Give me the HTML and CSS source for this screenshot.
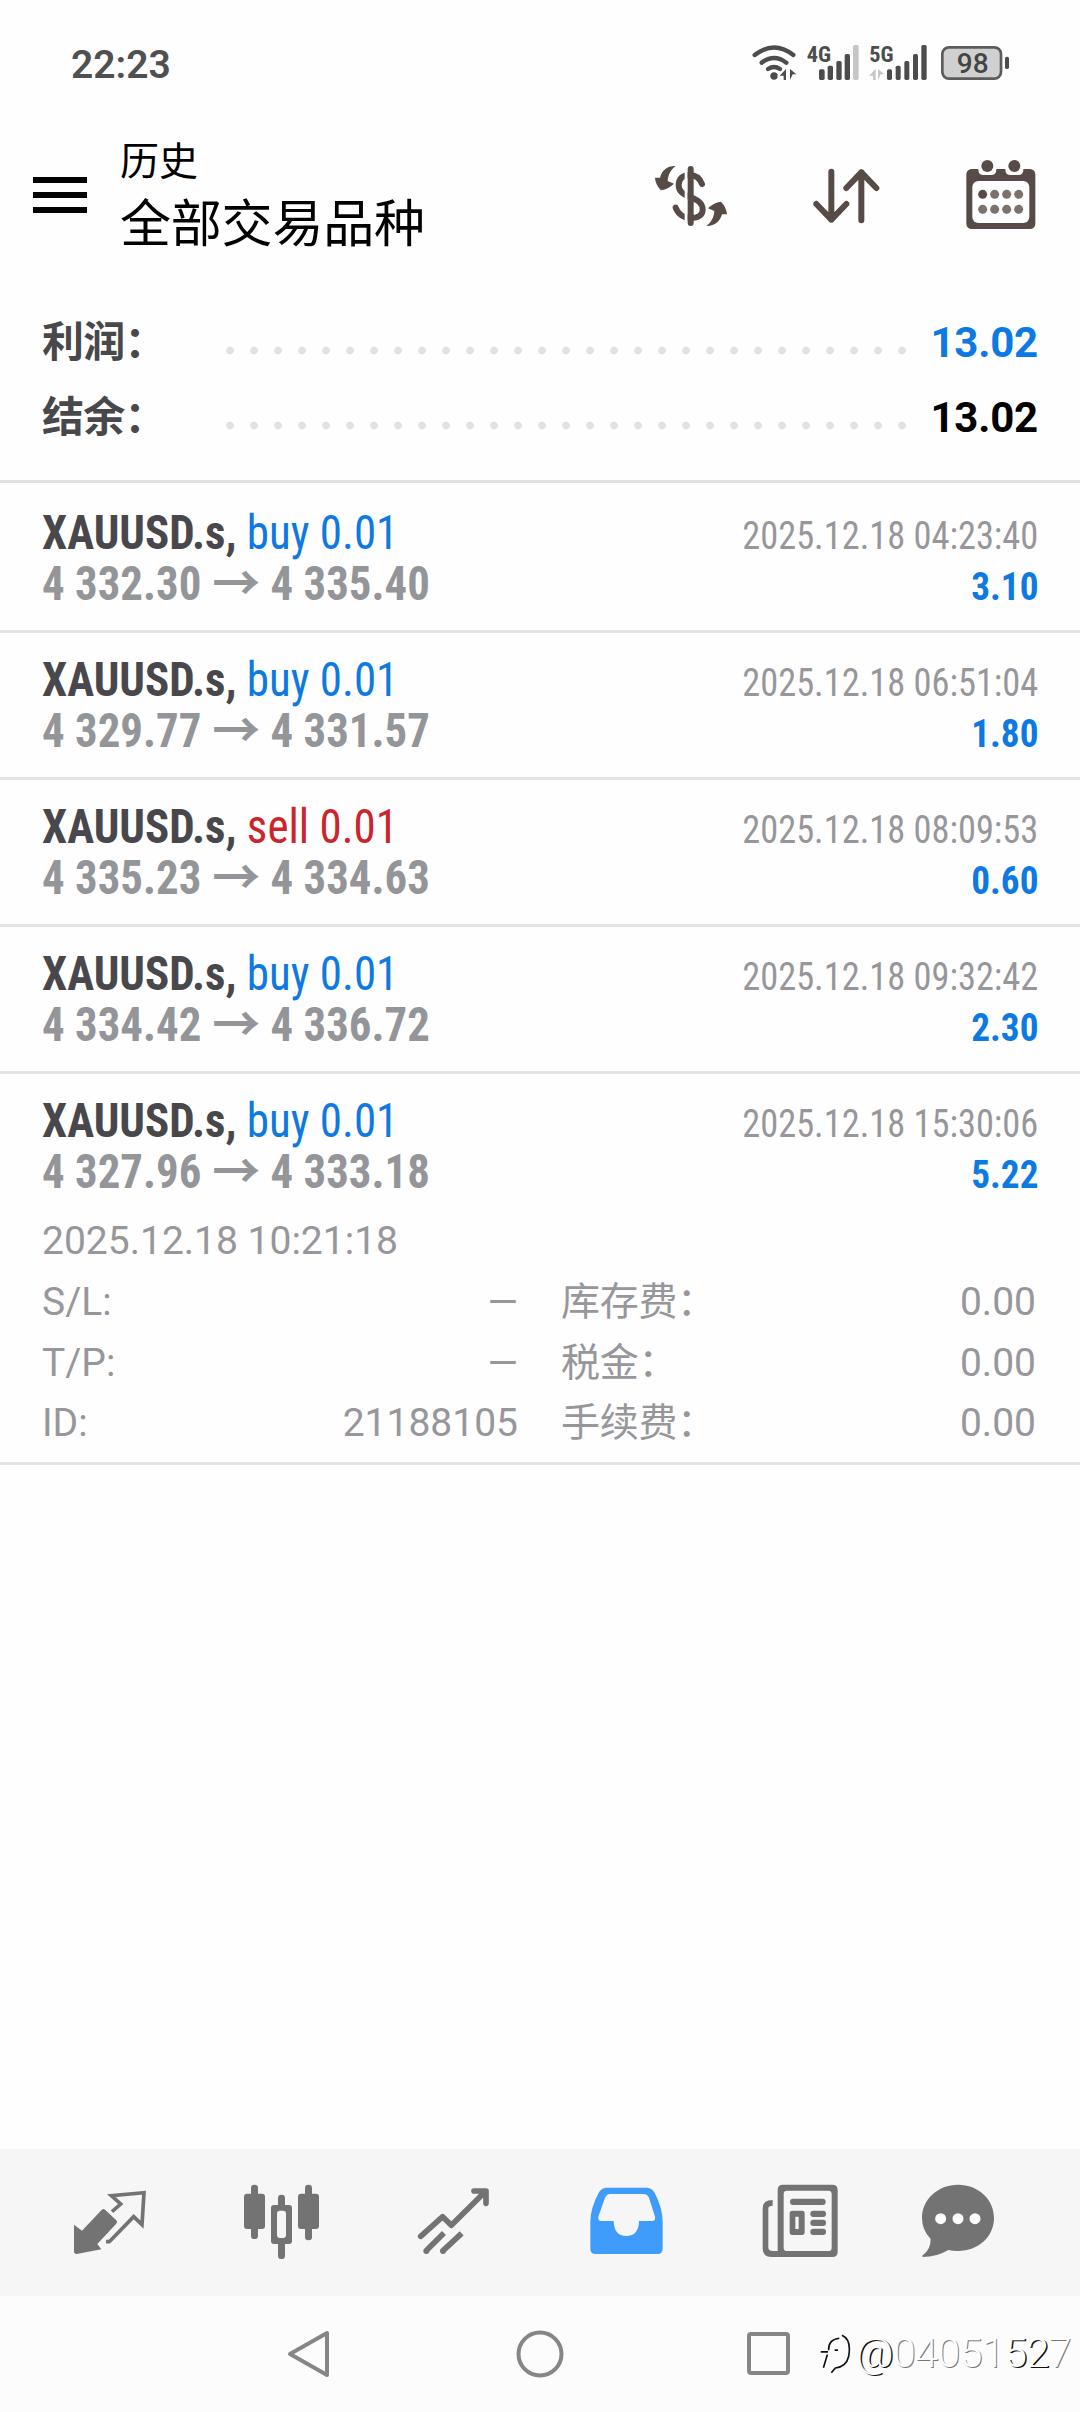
FILE: index.html
```html
<!DOCTYPE html>
<html lang="zh-CN">
<head>
<meta charset="utf-8">
<title>历史</title>
<link rel="stylesheet" href="styles.css">
</head>
<body>
<div class="screen">
  <div class="status">
    <span class="clock">22:23</span>
    <svg class="status-icons" viewBox="0 0 840 210">
      <g fill="none" stroke="#4c4c4c" stroke-width="13" stroke-linecap="round">
        <path d="M44 75Q102 30 160 75"/><path d="M65 98Q102 70 139 98"/><path d="M84 117Q102 105 120 117"/>
      </g>
      <g fill="#4c4c4c">
        <circle cx="102" cy="138" r="11"/>
        <path d="M119 137L138 117V150H131V137ZM150 117L169 133H158L150 150Z"/>
        <rect x="237" y="118" width="17" height="32" rx="5"/><rect x="263" y="107" width="16" height="43" rx="5"/>
        <rect x="289" y="93" width="16" height="57" rx="5"/><rect x="314" y="72" width="16" height="78" rx="5"/>
        <rect x="441" y="118" width="15" height="32" rx="5"/><rect x="467" y="107" width="15" height="43" rx="5"/>
        <rect x="493" y="93" width="15" height="57" rx="5"/><rect x="519" y="72" width="15" height="78" rx="5"/>
        <rect x="544" y="45" width="16" height="105" rx="5"/><rect x="795" y="80" width="12" height="37" rx="5"/>
      </g>
      <g fill="#c6c6c6">
        <rect x="339" y="45" width="17" height="105" rx="5"/>
        <path d="M387 137L407 117V150H399V137ZM414 117L433 133H422L414 150Z"/>
      </g>
      <rect x="607" y="52" width="176" height="94" rx="20" fill="#d0d0d0" stroke="#5c5c5c" stroke-width="8"/>
      <text class="net" x="200" y="96" textLength="73" lengthAdjust="spacingAndGlyphs">4G</text>
      <text class="net" x="388" y="96" textLength="73" lengthAdjust="spacingAndGlyphs">5G</text>
      <text class="charge" x="698" y="130" text-anchor="middle">98</text>
    </svg>
  </div>

  <div class="header">
    <svg class="menu" viewBox="0 0 54 36"><path d="M0 0H54V6H0ZM0 15H54V21H0ZM0 30H54V36H0Z"/></svg>
    <div class="titles"><div class="subtitle">历史</div><div class="title">全部交易品种</div></div>
    <svg width="74" height="72" viewBox="100 84 222 216">
      <path d="M244 159C236 138 224 132 207 132C186 132 174 144 174 163C174 184 192 191 210 199C232 208 246 216 246 236C246 252 232 261 211 261C190 261 172 249 165 230" fill="none" stroke="#564b46" stroke-width="18" stroke-linecap="round"/>
      <path d="M192 100H201V290H192Z" fill="#fefefe"/>
      <rect x="201" y="105" width="18" height="180" rx="9" fill="#564b46"/>
      <path id="swap" d="M165 105C140 104 124 118 118 140L103 140C104 155 112 170 122 178C136 176 150 168 160 158L141 150C142 132 150 116 165 105Z" fill="#564b46"/>
      <use href="#swap" transform="rotate(180 211 195)"/>
    </svg>
    <svg width="69" height="72" viewBox="575 84 207 216">
      <path d="M633 122V266M588 219L633 266L678 219M723 268V124M678 171L723 124L768 171" fill="none" stroke="#564b46" stroke-width="18" stroke-linecap="round" stroke-linejoin="round"/>
    </svg>
    <svg width="72" height="72" viewBox="1034 84 216 216">
      <rect x="1038" y="114" width="207" height="180" rx="16" fill="#564b46"/>
      <rect x="1056" y="150" width="171" height="126" rx="18" fill="#fefefe"/>
      <path d="M1074 110H1128V116Q1128 132 1112 132H1090Q1074 132 1074 116ZM1155 110H1209V116Q1209 132 1193 132H1171Q1155 132 1155 116Z" fill="#fefefe"/>
      <g fill="#564b46"><circle cx="1101" cy="105" r="18"/><circle cx="1182" cy="105" r="18"/><circle cx="1087" cy="190" r="13.500"/></g>
      <g fill="#7b726c"><circle cx="1123" cy="190" r="13.500"/><circle cx="1159" cy="190" r="13.500"/><circle cx="1195" cy="190" r="13.500"/><circle cx="1087" cy="235" r="13.500"/><circle cx="1123" cy="235" r="13.500"/><circle cx="1159" cy="235" r="13.500"/><circle cx="1195" cy="235" r="13.500"/></g>
    </svg>
  </div>

  <div class="summary">
    <div class="sum-row"><span class="sum-label">利润：</span><span class="dots"></span><span class="sum-value profit">13.02</span></div>
    <div class="sum-row"><span class="sum-label">结余：</span><span class="dots"></span><span class="sum-value">13.02</span></div>
  </div>

  <div class="deals">
    <div class="deal">
      <div class="line"><span class="symbol">XAUUSD.s, <span class="buy">buy 0.01</span></span><span class="time">2025.12.18 04:23:40</span></div>
      <div class="line"><span class="prices">4 332.30 <span class="to">→</span> 4 335.40</span><span class="gain">3.10</span></div>
    </div>
    <div class="deal">
      <div class="line"><span class="symbol">XAUUSD.s, <span class="buy">buy 0.01</span></span><span class="time">2025.12.18 06:51:04</span></div>
      <div class="line"><span class="prices">4 329.77 <span class="to">→</span> 4 331.57</span><span class="gain">1.80</span></div>
    </div>
    <div class="deal">
      <div class="line"><span class="symbol">XAUUSD.s, <span class="sell">sell 0.01</span></span><span class="time">2025.12.18 08:09:53</span></div>
      <div class="line"><span class="prices">4 335.23 <span class="to">→</span> 4 334.63</span><span class="gain">0.60</span></div>
    </div>
    <div class="deal">
      <div class="line"><span class="symbol">XAUUSD.s, <span class="buy">buy 0.01</span></span><span class="time">2025.12.18 09:32:42</span></div>
      <div class="line"><span class="prices">4 334.42 <span class="to">→</span> 4 336.72</span><span class="gain">2.30</span></div>
    </div>
    <div class="deal open">
      <div class="line"><span class="symbol">XAUUSD.s, <span class="buy">buy 0.01</span></span><span class="time">2025.12.18 15:30:06</span></div>
      <div class="line"><span class="prices">4 327.96 <span class="to">→</span> 4 333.18</span><span class="gain">5.22</span></div>
      <div class="details">
        <div class="opened">2025.12.18 10:21:18</div>
        <div class="pair"><span>S/L:</span><span class="dash">—</span></div><div class="pair"><span class="fee">库存费：</span><span>0.00</span></div>
        <div class="pair"><span>T/P:</span><span class="dash">—</span></div><div class="pair"><span class="fee">税金：</span><span>0.00</span></div>
        <div class="pair"><span>ID:</span><span>21188105</span></div><div class="pair"><span class="fee">手续费：</span><span>0.00</span></div>
      </div>
    </div>
  </div>

  <div class="tabs">
    <svg viewBox="-48 27 516 441">
      <path d="M102 254L126 272L184 211Q190 204 196 210L228 240Q234 246 228 252L172 312L184 328L110 342Q102 342 102 334Z" fill="#737373"/>
      <path d="M216 215L242 192L214 167L312 158L306 254L281 230L208 305H198" fill="none" stroke="#737373" stroke-width="11"/>
    </svg>
    <svg viewBox="468 27 516 441" fill="#737373">
      <rect x="633" y="134" width="21" height="163" rx="10"/><rect x="612" y="161" width="63" height="106" rx="9"/>
      <rect x="714" y="164" width="21" height="193" rx="10"/><rect x="693" y="195" width="63" height="117" rx="9"/>
      <rect x="711" y="212" width="27" height="82" rx="9" fill="#f6f6f6"/>
      <rect x="795" y="134" width="21" height="167" rx="10"/><rect x="774" y="161" width="63" height="106" rx="9"/>
    </svg>
    <svg viewBox="984 27 516 441" fill="none" stroke="#737373" stroke-width="17" stroke-linejoin="round">
      <path d="M1142 289L1208 230L1234 256L1337 154M1302 153H1338V190" stroke-linecap="round"/>
      <path d="M1212 279L1160 331M1265 280L1210 331"/>
      <g fill="#737373" stroke="none"><circle cx="1159" cy="333" r="9"/><circle cx="1209" cy="333" r="9"/></g>
    </svg>
    <svg viewBox="-60 27 516 441">
      <path d="M138 143H262Q276 144 284 158Q308 205 308 245V326Q308 342 292 342H107Q91 342 91 326V245Q91 205 116 158Q124 144 138 143Z" fill="#409cfb"/>
      <path d="M150 162H250Q263 163 267 173L285 230Q287 243 276 243H237Q236 288 199 288Q162 288 161 243H124Q113 243 115 230L135 173Q140 163 150 162Z" fill="#f6f6f6"/>
    </svg>
    <svg viewBox="456 27 516 441" fill="#737373">
      <path d="M638 180V197Q625 197 625 205V324Q626 333 639 333H653V150Q653 134 669 134H817Q833 134 833 150V335Q833 351 817 351H634Q608 351 608 325V205Q608 180 638 180ZM681 152Q671 152 671 162V323Q671 333 681 333H805Q815 333 815 323V162Q815 152 805 152Z" fill-rule="evenodd"/>
      <rect x="690" y="176" width="107" height="19" rx="9"/>
      <path d="M697 212H726Q734 212 734 220V277Q734 285 726 285H697Q689 285 689 277V220Q689 212 697 212ZM706 230V267H716V230Z" fill-rule="evenodd"/>
      <rect x="751" y="212" width="47" height="19" rx="9"/><rect x="751" y="239" width="47" height="19" rx="9"/><rect x="751" y="266" width="47" height="19" rx="9"/>
    </svg>
    <svg viewBox="972 27 516 441">
      <path d="M1194 134C1255 134 1302 178 1302 234C1302 290 1255 333 1194 333Q1178 333 1165 330Q1130 351 1088 351Q1084 347 1090 344Q1112 328 1112 297Q1086 270 1086 234C1086 178 1134 134 1194 134Z" fill="#737373"/>
      <g fill="#fff"><circle cx="1142" cy="236" r="16.500"/><circle cx="1194" cy="236" r="16.500"/><circle cx="1245" cy="236" r="16.500"/></g>
    </svg>
  </div>

  <div class="navbar">
    <svg viewBox="0 0 48 48"><path d="M42 3V45L5 24Z"/></svg>
    <svg viewBox="0 0 48 48"><circle cx="24" cy="24" r="21.500"/></svg>
    <svg viewBox="0 0 48 48"><rect x="2" y="4" width="39" height="39" rx="2"/></svg>
    <div class="watermark">
      <svg viewBox="60 75 102 130"><path d="M68 135H90M92 130Q90 98 124 94M88 143L76 183M132 85Q162 98 152 150Q145 180 112 184L100 198M110 130H120"/></svg><span><span class="at">@</span>04051<span class="at">52</span>7</span>
    </div>
  </div>
</div>
</body>
</html>
```
FILE: styles.css
```css
* { box-sizing: border-box; }
body { margin: 0; background: #fefefe; }
svg { display: block; flex: none; }

.screen {
  width: 1080px;
  height: 2412px;
  display: flex;
  flex-direction: column;
  font-family: Roboto, "Noto Sans CJK SC", sans-serif;
  color: #48484c;
  overflow: hidden;
}

.status {
  height: 84px;
  display: flex;
  justify-content: space-between;
  padding: 30px 60px 0 71px;
}
.clock {
  font-size: 39px;
  font-weight: 600;
  line-height: 70px;
  color: #505050;
}
.status-icons { width: 280px; height: 70px; }
.net { font: 700 67px "Roboto Condensed", sans-serif; fill: #4c4c4c; }
.charge { font: 500 84px Roboto, sans-serif; fill: #444; }

.header {
  height: 221px;
  display: flex;
  align-items: center;
  gap: 84px;
  padding: 0 43px 0 33px;
}
.menu { width: 54px; height: 36px; }
.titles {
  flex: 1;
  margin-left: -51px;
  padding-bottom: 6px;
  font-family: "Noto Sans CJK SC", sans-serif;
  color: #000;
}
.subtitle { font-size: 39px; line-height: 57px; }
.title { font-size: 51px; line-height: 66px; letter-spacing: -0.2px; }

.summary {
  height: 178px;
  padding: 0 42px;
  border-bottom: 3px solid #e1e1e1;
}
.sum-row {
  height: 75px;
  display: flex;
  line-height: 75px;
  font-size: 42px;
  font-weight: 700;
}
.sum-label { width: 176px; letter-spacing: -0.8px; }
.dots {
  width: 696px;
  background: radial-gradient(circle at 12px 45.500px, #e2e2e2 3.500px, transparent 4.300px) 0 0 / 24px 75px;
}
.sum-value { margin-left: auto; color: #000; letter-spacing: -0.2px; }
.sum-value.profit, .buy, .gain { color: #0d79e2; }
.sell { color: #c9252b; }

.deals { flex: 1; }
.deal {
  height: 147px;
  padding: 24px 42px 0;
}
.deal + .deal { box-shadow: inset 0 3px #e3e4e4; }
.deal.open { height: 394px; border-bottom: 3px solid #e3e4e4; }
.line {
  height: 51px;
  display: flex;
  justify-content: space-between;
  align-items: baseline;
  line-height: 51px;
  font-family: "Roboto Condensed", "Noto Sans CJK SC", sans-serif;
  white-space: pre;
}
.symbol, .prices {
  font-size: 48px;
  font-weight: 700;
  transform: scaleX(0.937);
  transform-origin: left;
}
.prices { color: #949599; transform: scaleX(0.934); }
.buy, .sell { font-weight: 400; }
.to {
  display: inline-block;
  line-height: 1;
  margin: 0 2px;
  transform: scaleX(1.07);
}
.time, .gain {
  font-size: 39px;
  color: #97979b;
  transform: scaleX(0.933);
  transform-origin: right;
}
.gain { font-weight: 700; color: #0d79e2; transform: scaleX(0.955); }

.details {
  display: grid;
  grid-template-columns: 476px 475px;
  column-gap: 43px;
  margin-top: 14px;
  font-size: 39px;
  line-height: 61px;
  color: #97979b;
}
.opened { grid-column: 1 / 3; }
.pair { height: 60.500px; display: flex; justify-content: space-between; }
.fee { letter-spacing: -0.3px; }

.tabs {
  height: 147px;
  display: flex;
  padding: 0 24px;
  background: #f6f6f6;
}
.tabs svg { width: 172px; height: 147px; }

.navbar {
  position: relative;
  height: 116px;
  display: flex;
  align-items: center;
  justify-content: center;
  gap: 183px;
  background: #fcfcfc;
}
.navbar > svg {
  width: 48px;
  height: 48px;
  fill: none;
  stroke: #868686;
  stroke-width: 4;
  stroke-linejoin: round;
}
.watermark {
  position: absolute;
  right: 9px;
  top: 29px;
  display: flex;
  align-items: center;
  gap: 4px;
  font-size: 41px;
  font-weight: 300;
  line-height: 56px;
  letter-spacing: -0.5px;
  color: #fefefe;
  text-shadow: 1px 1px 0 #777;
}
.at { text-shadow: 1.500px 1px 0 #111; }
.watermark svg {
  width: 34px;
  height: 43px;
  fill: none;
  stroke: #111;
  stroke-width: 5;
}
```
